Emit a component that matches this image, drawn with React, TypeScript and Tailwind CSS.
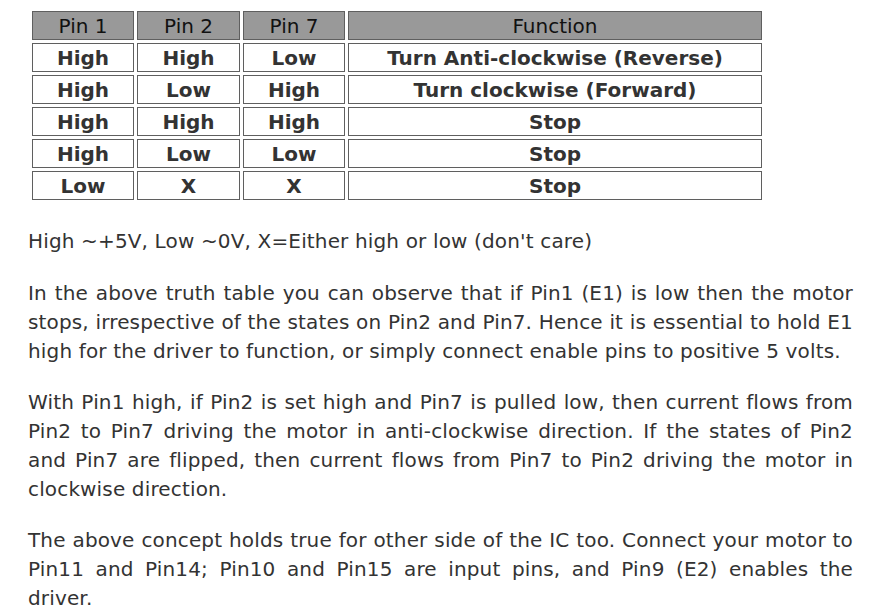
import React from "react";

const rows: string[][] = [
  ["High", "High", "Low", "Turn Anti-clockwise (Reverse)"],
  ["High", "Low", "High", "Turn clockwise (Forward)"],
  ["High", "High", "High", "Stop"],
  ["High", "Low", "Low", "Stop"],
  ["Low", "X", "X", "Stop"],
];

const headers = ["Pin 1", "Pin 2", "Pin 7", "Function"];

export default function App() {
  return (
    <div
      className="w-[873px] h-[613px] overflow-hidden bg-white text-[#333333]"
      style={{ fontFamily: '"DejaVu Sans", Verdana, sans-serif' }}
    >
      <div className="pt-[11px] pl-[32px]">
        <div className="grid grid-cols-[102px_103px_102px_414px] auto-rows-[29px] gap-[3px]">
          {headers.map((h) => (
            <div
              key={h}
              className="flex items-center justify-center border-[1.5px] border-[#5f5f5f] bg-[#999999] pt-[1px] text-[20px] text-[#111111]"
            >
              {h}
            </div>
          ))}
          {rows.map((r, i) =>
            r.map((c, j) => (
              <div
                key={`${i}-${j}`}
                className="flex items-center justify-center border-[1.5px] border-[#5f5f5f] bg-white pt-[1px] text-[20px] font-bold text-[#333333]"
              >
                {c}
              </div>
            ))
          )}
        </div>
      </div>
      <div className="pl-[28px] w-[853px] text-[20px] leading-[29px] tracking-[0.15px] text-justify">
        <p className="mt-[27px]">High ~+5V, Low ~0V, X=Either high or low (don't care)</p>
        <p className="mt-[23px]">
          In the above truth table you can observe that if Pin1 (E1) is low then the motor stops,
          irrespective of the states on Pin2 and Pin7. Hence it is essential to hold E1 high for the
          driver to function, or simply connect enable pins to positive 5 volts.
        </p>
        <p className="mt-[22px]">
          With Pin1 high, if Pin2 is set high and Pin7 is pulled low, then current flows from Pin2 to
          Pin7 driving the motor in anti-clockwise direction. If the states of Pin2 and Pin7 are
          flipped, then current flows from Pin7 to Pin2 driving the motor in clockwise direction.
        </p>
        <p className="mt-[22px]">
          The above concept holds true for other side of the IC too. Connect your motor to Pin11 and
          Pin14; Pin10 and Pin15 are input pins, and Pin9 (E2) enables the driver.
        </p>
      </div>
    </div>
  );
}
